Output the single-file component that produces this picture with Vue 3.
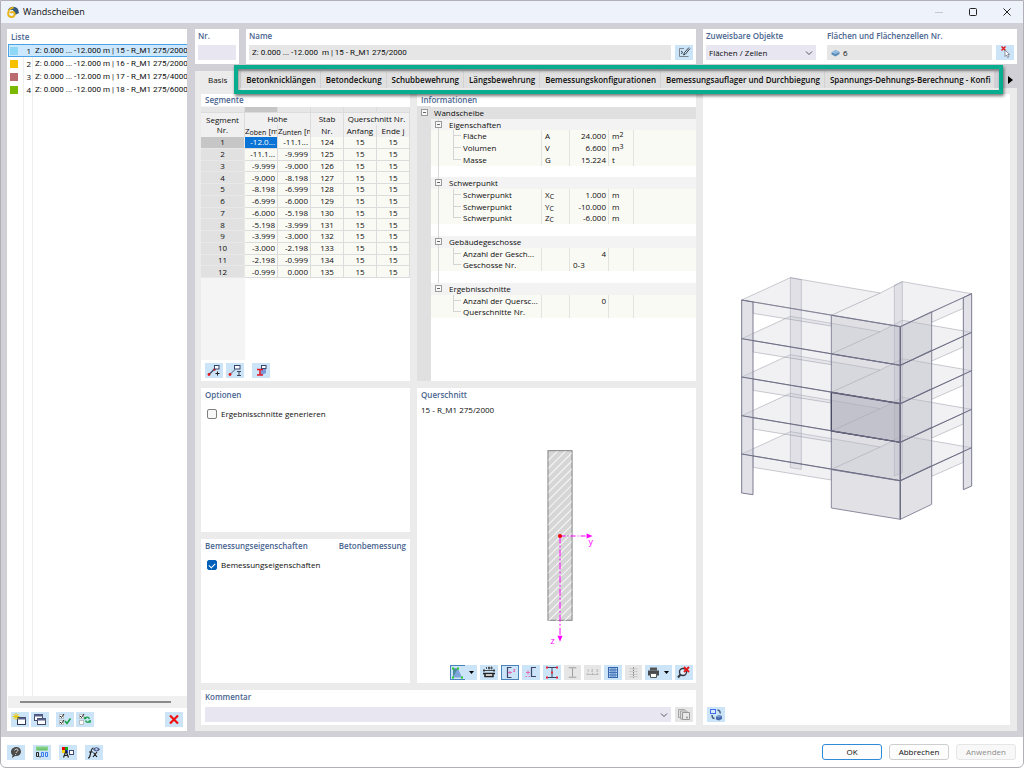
<script setup>
import { ref } from 'vue'

const walls = ref([
  { nr: 1, color: '#8dd7f7', name: 'Z: 0.000 ... -12.000 m | 15 - R_M1 275/2000' },
  { nr: 2, color: '#f7c100', name: 'Z: 0.000 ... -12.000 m | 16 - R_M1 275/2000' },
  { nr: 3, color: '#bb6c70', name: 'Z: 0.000 ... -12.000 m | 17 - R_M1 275/4000' },
  { nr: 4, color: '#79b900', name: 'Z: 0.000 ... -12.000 m | 18 - R_M1 275/6000' },
])
const selected = ref(1)

const tabs = [
  'Basis',
  'Betonknicklängen',
  'Betondeckung',
  'Schubbewehrung',
  'Längsbewehrung',
  'Bemessungskonfigurationen',
  'Bemessungsauflager und Durchbiegung',
  'Spannungs-Dehnungs-Berechnung - Konfi',
]

const segments = [
  ['-12.0...', '-11.1...', 124],
  ['-11.1...', '-9.999', 125],
  ['-9.999', '-9.000', 126],
  ['-9.000', '-8.198', 127],
  ['-8.198', '-6.999', 128],
  ['-6.999', '-6.000', 129],
  ['-6.000', '-5.198', 130],
  ['-5.198', '-3.999', 131],
  ['-3.999', '-3.000', 132],
  ['-3.000', '-2.198', 133],
  ['-2.198', '-0.999', 134],
  ['-0.999', '0.000', 135],
]

const info = [
  { kind: 'root', name: 'Wandscheibe' },
  { kind: 'group', name: 'Eigenschaften' },
  { kind: 'item', name: 'Fläche', sym: 'A', val: '24.000', unit: 'm', sup: '2' },
  { kind: 'item', name: 'Volumen', sym: 'V', val: '6.600', unit: 'm', sup: '3' },
  { kind: 'item', name: 'Masse', sym: 'G', val: '15.224', unit: 't', last: true },
  { kind: 'blank' },
  { kind: 'group', name: 'Schwerpunkt' },
  { kind: 'item', name: 'Schwerpunkt', sym: 'X', sub: 'C', val: '1.000', unit: 'm' },
  { kind: 'item', name: 'Schwerpunkt', sym: 'Y', sub: 'C', val: '-10.000', unit: 'm' },
  { kind: 'item', name: 'Schwerpunkt', sym: 'Z', sub: 'C', val: '-6.000', unit: 'm', last: true },
  { kind: 'blank' },
  { kind: 'group', name: 'Gebäudegeschosse' },
  { kind: 'item', name: 'Anzahl der Gesch...', val: '4' },
  { kind: 'item', name: 'Geschosse Nr.', val: '0-3', left: true, last: true },
  { kind: 'blank' },
  { kind: 'group', name: 'Ergebnisschnitte', end: true },
  { kind: 'item', name: 'Anzahl der Quersc...', val: '0', tail: true },
  { kind: 'item', name: 'Querschnitte Nr.', last: true, tail: true },
]

const icons = {
  newItem: '<rect x="6.500" y="5.500" width="8" height="7" fill="#fff" stroke="#333a50"/><path d="M6 6.500h9" stroke="#56618c" stroke-width="2"/><path d="M5 1v7M1.500 4.500h7M2.500 2l5 5M7.500 2l-5 5" stroke="#e8c800" stroke-width="1"/>',
  copyItem: '<rect x="3.500" y="2.500" width="8" height="6" fill="#fff" stroke="#444b60"/><path d="M3 3.500h9" stroke="#56618c" stroke-width="2"/><rect x="6.500" y="6.500" width="8" height="6" fill="#fff" stroke="#444b60"/><path d="M6 7.500h9" stroke="#56618c" stroke-width="2"/>',
  checkAll: '<path d="M3.500 2.500h4v4h-4zM3.500 8.500h4v4h-4z" fill="#fff" stroke="#aaa" stroke-width=".7"/><path d="M4 4l1.500 1.500L8 2M4 10l1.500 1.500L8 8" fill="none" stroke="#222"/><path d="M9 9l2 2.500L14.500 6.500" fill="none" stroke="#18a048" stroke-width="1.600"/>',
  invert: '<path d="M3.500 2.500h4v4h-4zM3.500 8.500h4v4h-4z" fill="#fff" stroke="#aaa" stroke-width=".7"/><path d="M4 4l1.500 1.500L8 2" fill="none" stroke="#222"/><path d="M8.500 7c1-2.500 4-2.500 5 0M14.500 8.500c-1 2.500-4 2.500-5 0" fill="none" stroke="#18a048" stroke-width="1.300"/><path d="M8 4.500l.5 3 2.500-1zM14.800 11l-.3-3-2.500 1z" fill="#18a048"/>',
  del: '<path d="M5 3.500l8 8M13 3.500l-8 8" stroke="#f01010" stroke-width="2.200"/>',
  help: '<path d="M9.500 2C6 2 4 4.500 4 7c0 1.500.8 2.500 1.500 3L5 13l3-2c4 .5 6-2 6-4.500S12 2 9.500 2z" fill="#4a4a4a"/><path d="M7.500 5.500c.5-2 4-2 3.500 0-.3 1-1.800 1-2 2.500M8.700 9v1" stroke="#ddd" fill="none"/>',
  units: '<path d="M3 1.500h12v4H3z" fill="#82d382"/><path d="M5 3.500v2M7 3.500v2M9 3.500v2M11 3.500v2M13 3.500v2" stroke="#3c9a50" stroke-width=".6"/><path d="M3.500 7.500h2v4h-2z" fill="none" stroke="#222"/><path d="M7 11v1.500" stroke="#222"/><path d="M8.500 7.500h2v4h-2zM12.500 7.500h2v4h-2z" fill="none" stroke="#3b7ded"/>',
  display: '<path d="M3 2h3v3H3z" fill="#e00"/><path d="M6 2h3v3H6z" fill="#14a614"/><path d="M3 5h3v3H3z" fill="#f4d000"/><path d="M6 5h3v3H6z" fill="#1546d8"/><path d="M4.500 12.500L7 6l2.500 6.500M5 10.500h4" fill="none" stroke="#222" stroke-width="1.200"/><rect x="10.500" y="5.500" width="4" height="4" fill="#fff" stroke="#444b70"/>',
  fx: '<path d="M3 13c2 0 2-2 2.500-4.500S6.500 3 8.500 3M4 7h4M8 12l4-5M8.500 7.500L12 12" fill="none" stroke="#222" stroke-width="1.200"/><path d="M8 4.500c2-3 5-3 7 0-2 2.500-5 2.500-7 0z" fill="#4c5a88"/><circle cx="11.500" cy="4.300" r="1.200" fill="#b8c4e8"/>',
  edit: '<path d="M9 3.500H4.500v8h9" fill="none" stroke="#7a858f"/><path d="M14 2.500L9.500 7.500 8.500 10l2-1L15 3.500M6 6l1.500 1L6.500 9" stroke="#384450" fill="none"/>',
  pick: '<path d="M5.500 1.500l4 4M9.500 1.500l-4 4" stroke="#e01818" stroke-width="1.400"/><path d="M9 5v6.500l1.500-1.500 1.200 2.500 1.200-.6-1.200-2.400h2z" fill="#fff" stroke="#778" stroke-width=".8"/>',
  lineAdd: '<path d="M3.500 12L10 5.500" stroke="#3c4a68" stroke-width="1.200"/><circle cx="4" cy="11.500" r="1.400" fill="#e01818"/><circle cx="9.500" cy="6.500" r="1.200" fill="#e01818"/><rect x="9.500" y="2.500" width="4.500" height="3.500" fill="#fff" stroke="#37446c"/><path d="M12.500 8.500v4M10.500 10.500h4" stroke="#222"/>',
  lineSec: '<path d="M3.500 12L9 6.500" stroke="#8393b0" stroke-width="1.200"/><circle cx="4" cy="11.500" r="1.400" fill="#e01818"/><rect x="8.500" y="2.500" width="5.500" height="3.500" fill="#fff" stroke="#37446c"/><path d="M11 8.500h4M11 12.500h4M13 8.500v4" stroke="#3c4658"/>',
  beam: '<path d="M9 7l5-2v5l-5 2.500z" fill="#7898d8"/><path d="M5 6.500h6M5 12h6M8 6.500v5" stroke="#e01828" stroke-width="1.600"/><rect x="9.500" y="2.500" width="4.500" height="3" fill="#fff" stroke="#37446c"/>',
  stress: '<path d="M3 12.500V3.500h5l4 9z" fill="#7fa4dc"/><path d="M3 12V3.500h5z" fill="#4b8f9c"/><path d="M2 2.500h2v2H2zM7 2.500h2v2H7zM2 11.500h2v2H2zM11 11.500h2v2h-2z" fill="#2ad02a"/>',
  dims: '<path d="M3 5.500h12M4 4v3M14 4v3" stroke="#222" stroke-width=".8"/><path d="M6.500 2v2M8.500 2h1v2h-1zM11 2h1v2h-1z" stroke="#333" fill="none" stroke-width=".8"/><path d="M5 8v3.500h8V8" fill="#fff" stroke="#222" stroke-width="1.500"/><path d="M3 8.500h12" stroke="#222" stroke-width="1.500"/>',
  axesC: '<path d="M10.500 2.500H6.500v10h4" fill="none" stroke="#3b466a" stroke-width="1.200"/><path d="M7 7.500h4M9 6v3M12.500 4.500H14l-1.500 2H14" fill="none" stroke="#e560b0" stroke-width=".9"/>',
  pointC: '<path d="M14 2.500H9.500v9H14" fill="none" stroke="#3b466a" stroke-width="1.200"/><path d="M4 7.500h4M6 5.500v4M3.500 11.500h1.500M6.500 11.500h1.500" stroke="#e560b0" fill="none" stroke-width=".9"/>',
  ibeam: '<path d="M4 2.500h10M4 12.500h10M9 3v9" stroke="#3b466a"/><path d="M3 1.500h2v2H3zM13 1.500h2v2h-2zM8 6.500h2v2H8zM3 11.500h2v2H3zM13 11.500h2v2h-2z" fill="#e8283c"/>',
  ibeamOff: '<path d="M5 2.500h8M5 12.500h8M9 3v9" stroke="#999"/>',
  numbers: '<path d="M3 9.500h12M3.500 8v2M9 8v2M14.500 8v2" stroke="#aaa" stroke-width=".8"/><path d="M4.500 4v3M8 4.500h1.500L8 6.500h1.500M13 4.500h1.500v2H13" fill="none" stroke="#aaa" stroke-width=".7"/>',
  grid: '<rect x="4.500" y="2.500" width="9" height="10" fill="#bcd7f5" stroke="#3465ae"/><path d="M7 2.500v10M9 2.500v10M11 2.500v10M4.500 5h9M4.500 7.500h9M4.500 10h9" stroke="#3465ae" stroke-width=".8"/>',
  rebar: '<path d="M9 2v11" stroke="#777" stroke-dasharray="1.500 1"/><path d="M5 3.500h3M10 3.500h3M5 6.500h3M10 6.500h3M5 9.500h3M10 9.500h3M5 12h3M10 12h3" stroke="#aaa" stroke-dasharray="1 1"/>',
  print: '<path d="M5 2.500h7v3H5z" fill="#555"/><path d="M3 5.500h11v5H3z" fill="#474b50"/><path d="M5.500 8.500h6v4h-6z" fill="#fff" stroke="#555"/>',
  zoomOff: '<circle cx="8" cy="7" r="3.500" fill="#e4f2fc" stroke="#333a44" stroke-width="1.400"/><path d="M5.500 9.500L3 12.500" stroke="#333a44" stroke-width="2"/><path d="M9 2l5 5M14 2L9 7" stroke="#e81818" stroke-width="1.800"/>',
  stack: '<path d="M3.500 2.500h6l1 1v7h-7z" fill="#ddd" stroke="#999" stroke-width=".8"/><path d="M5.500 4h6l1 1v7h-7z" fill="#ddd" stroke="#999" stroke-width=".8"/><path d="M7.500 5.500h7v7h-7z" fill="#e8e8e8" stroke="#999"/><circle cx="12" cy="10.500" r="1" fill="#999"/>',
  views: '<rect x="3.500" y="2.500" width="5" height="4" fill="#dbe8ff" stroke="#3f6ff0"/><path d="M10.500 3c2 .5 3 1.500 2.500 3.500M5 8c0 2 .5 3.500 2.500 3.500" fill="none" stroke="#445a80" stroke-width="1.400"/><path d="M9 9.500l3-1.500 3 1v3l-3 1.500-3-1z" fill="#4a6cae"/><path d="M9 9.500l3-1.500 3 1-3 1.500z" fill="#7d9cd0"/>',
}

const sectionTools = [
  { icon: 'stress', label: 'Spannungspunkte', menu: true, framed: true },
  { icon: 'dims', label: 'Bemaßung' },
  { icon: 'axesC', label: 'Hauptachsen', on: true },
  { icon: 'pointC', label: 'Schubmittelpunkt' },
  { icon: 'ibeam', label: 'Profilpunkte' },
  { icon: 'ibeamOff', label: 'Profilumriss', off: true },
  { icon: 'numbers', label: 'Nummerierung', off: true },
  { icon: 'grid', label: 'Raster' },
  { icon: 'rebar', label: 'Bewehrung', off: true },
  { icon: 'print', label: 'Drucken', menu: true },
  { icon: 'zoomOff', label: 'Zoom zurücksetzen' },
]

// Storey geometry, one unit is a third of a pixel
const floors = [0, 116, 231, 347, 462]
const shift = (pts, dy) => pts.map(([x, y]) => `${x},${y + dy}`).join(' ')
const slab = [[65, 104], [211, 37], [481, 83], [547, 49], [755, 85], [541, 184]]
const beamLeft = [[99, 110], [334, 150], [334, 182], [99, 144]]
const beamRight = [[635, 139], [730, 97], [730, 129], [635, 171]]
const wallFront = [[334, 150], [541, 184], [541, 300], [334, 266]]
const wallSide = [[541, 184], [635, 139], [635, 255], [541, 300]]
const edge = [[65, 104], [541, 184], [755, 85]]
const hatch = Array.from({ length: 24 }, (_, i) => 436 + i * 8)
</script>

<template>
  <div class="window">
    <header class="titlebar">
      <svg class="logo" viewBox="0 0 12 12" aria-hidden="true">
        <path d="M1 4C3 0 8 0 11 3l1 4-4 2L6 4z" fill="#35597c" />
        <path d="M6.500 1.500C3 2 1 5 1.200 8c.2 4 6.500 4 6.500.3C7.700 5.500 4 5.500 3.300 7" fill="none" stroke="#e8b51c" stroke-width="2" />
      </svg>
      <h1>Wandscheiben</h1>
      <div class="winbuttons">
        <button type="button" aria-label="Minimieren" disabled><svg viewBox="0 0 10 10"><path d="M1 5.500h8" stroke="#c3c8cf" /></svg></button>
        <button type="button" aria-label="Maximieren"><svg viewBox="0 0 10 10"><rect x="1.500" y="1.500" width="7" height="7" rx="1" fill="none" stroke="#222" /></svg></button>
        <button type="button" aria-label="Schließen"><svg viewBox="0 0 10 10"><path d="M1.500 1.500l7 7M8.500 1.500l-7 7" stroke="#222" /></svg></button>
      </div>
    </header>

    <main class="main">
      <aside class="list">
        <h2>Liste</h2>
        <ul>
          <li v-for="w in walls" :key="w.nr">
            <button type="button" class="item" :class="{ active: w.nr === selected }" @click="selected = w.nr">
              <span class="swatch" :style="{ background: w.color }"></span>
              <span class="num">{{ w.nr }}</span>
              <span class="label">{{ w.name }}</span>
            </button>
          </li>
        </ul>
        <div class="hscroll"><span></span></div>
        <div class="tools">
          <button type="button" class="ib" aria-label="Neu"><svg viewBox="0 0 18 15" v-html="icons.newItem"></svg></button>
          <button type="button" class="ib" aria-label="Kopieren"><svg viewBox="0 0 18 15" v-html="icons.copyItem"></svg></button>
          <button type="button" class="ib apart" aria-label="Alle auswählen"><svg viewBox="0 0 18 15" v-html="icons.checkAll"></svg></button>
          <button type="button" class="ib" aria-label="Auswahl umkehren"><svg viewBox="0 0 18 15" v-html="icons.invert"></svg></button>
          <button type="button" class="ib push" aria-label="Löschen"><svg viewBox="0 0 18 15" v-html="icons.del"></svg></button>
        </div>
      </aside>

      <div class="content">
        <div class="top">
          <section class="panel field-panel">
            <label for="nr">Nr.</label>
            <div class="line"><input id="nr" class="field lilac" type="text" /></div>
          </section>
          <section class="panel field-panel">
            <label for="name">Name</label>
            <div class="line">
              <input id="name" class="field digits" type="text" value="Z: 0.000 ... -12.000  m | 15 - R_M1 275/2000" readonly />
              <button type="button" class="ib" aria-label="Name bearbeiten"><svg viewBox="0 0 18 15" v-html="icons.edit"></svg></button>
            </div>
          </section>
          <section class="panel objects">
            <div class="field-panel">
              <label for="objects">Zuweisbare Objekte</label>
              <div class="line select">
                <select id="objects" class="field lilac"><option>Flächen / Zellen</option></select>
                <svg class="chev" viewBox="0 0 8 6"><path d="M1 1.500l3 3 3-3" fill="none" stroke="#555" /></svg>
              </div>
            </div>
            <div class="field-panel">
              <label for="cells">Flächen und Flächenzellen Nr.</label>
              <div class="line">
                <span class="iconfield">
                  <svg viewBox="0 0 9 8"><path d="M0.500 3.500l4-2.500 4 2v2l-4 2.500-4-2z" fill="#5b8cb8" /><path d="M0.500 3.500l4-2.500 4 2-4 2z" fill="#93bde0" /></svg>
                  <input id="cells" type="text" value="6" />
                </span>
                <button type="button" class="ib" aria-label="Auswählen"><svg viewBox="0 0 18 15" v-html="icons.pick"></svg></button>
              </div>
            </div>
          </section>
        </div>

        <div class="tabbar">
          <nav class="tabs">
            <button v-for="(t, i) in tabs" :key="t" type="button" :class="{ current: i === 0 }">{{ t }}</button>
          </nav>
          <button type="button" class="more" aria-label="Weitere Register"><svg viewBox="0 0 5 8"><path d="M0 0l5 4-5 4z" fill="#000" /></svg></button>
          <div class="highlight"></div>
        </div>

        <div class="sheet">
          <section class="panel segments">
            <h2>Segmente</h2>
            <div class="tablewrap">
              <table>
                <thead>
                  <tr class="thin"><th></th><th class="dark"></th><th></th><th></th><th></th><th></th></tr>
                  <tr>
                    <th rowspan="2">Segment<br />Nr.</th>
                    <th colspan="2">Höhe</th>
                    <th>Stab</th>
                    <th colspan="2">Querschnitt Nr.</th>
                  </tr>
                  <tr>
                    <th>Z<small>oben</small> [m</th>
                    <th>Z<small>unten</small> [m</th>
                    <th>Nr.</th>
                    <th>Anfang</th>
                    <th>Ende j</th>
                  </tr>
                </thead>
                <tbody>
                  <tr v-for="(s, i) in segments" :key="i">
                    <th :class="{ dark: i === 0 }">{{ i + 1 }}</th>
                    <td class="r" :class="{ sel: i === 0 }">{{ s[0] }}</td>
                    <td class="r">{{ s[1] }}</td>
                    <td>{{ s[2] }}</td>
                    <td>15</td>
                    <td>15</td>
                  </tr>
                </tbody>
              </table>
            </div>
            <div class="tools">
              <button type="button" class="ib" aria-label="Segment hinzufügen"><svg viewBox="0 0 18 15" v-html="icons.lineAdd"></svg></button>
              <button type="button" class="ib" aria-label="Segmentquerschnitt"><svg viewBox="0 0 18 15" v-html="icons.lineSec"></svg></button>
              <button type="button" class="ib apart" aria-label="Querschnitt bearbeiten"><svg viewBox="0 0 18 15" v-html="icons.beam"></svg></button>
            </div>
          </section>

          <section class="panel infos">
            <h2>Informationen</h2>
            <div class="tree">
              <div class="rows">
                <div v-for="(r, i) in info" :key="i" class="row" :class="[r.kind, { last: r.last, tail: r.tail, end: r.end }]">
                  <span class="gut"><i v-if="r.kind === 'root'" class="box"></i></span>
                  <template v-if="r.kind === 'root'"><span class="title">{{ r.name }}</span></template>
                  <template v-else>
                    <span class="stem"><i v-if="r.kind === 'group'" class="box"></i></span>
                    <span v-if="r.kind === 'group'" class="title">{{ r.name }}</span>
                    <template v-if="r.kind === 'item'">
                      <span class="elbow"></span>
                      <span class="name">{{ r.name }}</span>
                      <span class="sym">{{ r.sym }}<sub v-if="r.sub">{{ r.sub }}</sub></span>
                      <span class="val" :class="{ left: r.left }">{{ r.val }}</span>
                      <span class="unit">{{ r.unit }}<sup v-if="r.sup">{{ r.sup }}</sup></span>
                      <span class="rest"></span>
                    </template>
                  </template>
                </div>
              </div>
            </div>
          </section>

          <section class="panel options">
            <h2>Optionen</h2>
            <label class="check"><input type="checkbox" /><span>Ergebnisschnitte generieren</span></label>
          </section>

          <section class="panel design">
            <div class="split"><h2>Bemessungseigenschaften</h2><h2>Betonbemessung</h2></div>
            <label class="check"><input type="checkbox" checked /><span>Bemessungseigenschaften</span></label>
          </section>

          <section class="panel cross">
            <h2>Querschnitt</h2>
            <p>15 - R_M1 275/2000</p>
            <svg class="drawing" viewBox="418 417 278 245">
              <clipPath id="bar"><rect x="549" y="452" width="23" height="169" /></clipPath>
              <rect x="548.500" y="451.500" width="24" height="169" fill="#d6d6d6" stroke="#808080" />
              <g clip-path="url(#bar)" stroke="#f8f8f8" stroke-width="1">
                <path v-for="y in hatch" :key="y" :d="`M548 ${y + 26}l26-26`" />
              </g>
              <g stroke="#f0f" fill="#f0f">
                <path d="M561 536.500h25" stroke-dasharray="5 2 1 2" />
                <path d="M560.500 537v98" stroke-dasharray="7 2 2 2" />
                <path d="M587 534l6 2.500-6 2.500zM558 636l2.500 6 2.500-6z" stroke="none" />
              </g>
              <circle cx="560.500" cy="536.500" r="2" fill="#f00000" />
              <text x="589" y="545">y</text>
              <text x="551" y="644">z</text>
            </svg>
            <div class="tools end">
              <button v-for="t in sectionTools" :key="t.icon" type="button" class="ib" :class="{ wide: t.menu, off: t.off, on: t.on, framed: t.framed }" :disabled="t.off" :aria-label="t.label">
                <svg viewBox="0 0 18 15" v-html="icons[t.icon]"></svg>
                <svg v-if="t.menu" class="caret" viewBox="0 0 5 3"><path d="M0 0h5L2.500 3z" fill="#000" /></svg>
              </button>
            </div>
          </section>

          <section class="panel comment">
            <label for="comment">Kommentar</label>
            <div class="line">
              <span class="select">
                <select id="comment" class="field lilac"><option></option></select>
                <svg class="chev" viewBox="0 0 8 6"><path d="M1 1.500l3 3 3-3" fill="none" stroke="#555" /></svg>
              </span>
              <button type="button" class="ib off" disabled aria-label="Kommentare"><svg viewBox="0 0 18 15" v-html="icons.stack"></svg></button>
            </div>
          </section>

          <section class="panel view">
            <svg class="model" viewBox="-51 -508 921 1818">
              <g fill="#c8c8d2" fill-opacity=".4" stroke="#8c8c9c" stroke-opacity=".45" stroke-width="3">
                <polygon points="211,37 244,43 244,612 211,607" />
                <polygon points="523,60 547,49 547,622 523,632" />
              </g>
              <g v-for="f in floors.slice().reverse()" :key="f" fill="#c8c8d2" stroke="#8c8c9c" stroke-width="3">
                <polygon :points="shift(slab, f)" fill-opacity=".25" stroke-opacity=".45" />
                <polyline :points="shift([[334, 150], [481, 83]], f)" stroke-opacity=".5" />
                <polygon :points="shift(beamLeft, f)" fill-opacity=".25" stroke-opacity=".45" />
                <polygon :points="shift(beamRight, f)" fill-opacity=".25" stroke-opacity=".45" />
              </g>
              <g fill="#c4c4d0" fill-opacity=".5" stroke="#7c7c92" stroke-width="3">
                <polygon points="65,104 99,110 99,688 65,683" />
                <polygon points="730,97 755,85 755,662 730,673" />
              </g>
              <g v-for="(f, i) in floors" :key="'w' + f" stroke="#8a8a9e" stroke-width="3" fill="#b9b9c4" :fill-opacity="i === 4 ? 0.42 : 0.45">
                <polygon :points="shift(wallFront, f)" />
                <polygon :points="shift(wallSide, f)" />
              </g>
              <polygon :points="shift(wallFront, 231)" fill="#a8a8b8" fill-opacity=".45" stroke="#4c4c64" stroke-width="4" />
              <g fill="none" stroke="#6c6c84">
                <polyline v-for="(f, i) in floors" :key="'e' + f" :points="shift(edge, f)" :stroke-width="i === 0 ? 2 : 3" />
                <path d="M541 184v578" stroke-width="4" />
              </g>
            </svg>
            <div class="tools">
              <button type="button" class="ib" aria-label="Ansicht"><svg viewBox="0 0 18 15" v-html="icons.views"></svg></button>
            </div>
          </section>
        </div>
      </div>
    </main>

    <footer class="footer">
      <button type="button" class="ib" aria-label="Hilfe"><svg viewBox="0 0 18 15" v-html="icons.help"></svg></button>
      <button type="button" class="ib" aria-label="Einheiten"><svg viewBox="0 0 18 15" v-html="icons.units"></svg></button>
      <button type="button" class="ib" aria-label="Darstellung"><svg viewBox="0 0 18 15" v-html="icons.display"></svg></button>
      <button type="button" class="ib" aria-label="Formeln"><svg viewBox="0 0 18 15" v-html="icons.fx"></svg></button>
      <div class="actions">
        <button type="button" class="btn primary">OK</button>
        <button type="button" class="btn">Abbrechen</button>
        <button type="button" class="btn" disabled>Anwenden</button>
      </div>
    </footer>
  </div>
</template>

<style>
body {
  margin: 0;
}
</style>

<style scoped>
* {
  box-sizing: border-box;
}
.window {
  display: flex;
  flex-direction: column;
  min-height: 100vh;
  overflow: hidden;
  border: 1px solid #b0b0b6;
  border-radius: 0 0 6px 6px;
  background: #d0d0d6;
  color: #0c0c0c;
  font: 500 8px/12px "Open Sans", "Noto Sans", sans-serif;
}
button,
input,
select {
  margin: 0;
  padding: 0;
  border: 0;
  border-radius: 0;
  color: inherit;
  font: inherit;
}
h1,
h2,
p,
ul {
  margin: 0;
  padding: 0;
  font-size: inherit;
  font-weight: 400;
}
h2,
.field-panel label,
.comment label {
  display: block;
  color: #4a6590;
  font-weight: 600;
  line-height: 12px;
  white-space: nowrap;
}
svg {
  display: block;
}
.titlebar {
  display: flex;
  align-items: center;
  height: 22px;
  padding: 0 6px;
  background: #eef2fa;
}
.logo {
  width: 12px;
  height: 12px;
}
.titlebar h1 {
  margin-left: 4px;
  font-size: 9px;
  font-weight: 500;
}
.winbuttons {
  display: flex;
  gap: 14px;
  margin-left: auto;
}
.winbuttons button {
  width: 20px;
  height: 20px;
  background: none;
}
.winbuttons svg {
  width: 10px;
  height: 10px;
  margin: auto;
}
.main {
  display: grid;
  flex: 1;
  grid-template-columns: 180px minmax(0, 1fr);
  gap: 8px;
  padding: 6px;
}
.panel {
  min-width: 0;
  background: #fff;
}
.list {
  display: flex;
  flex-direction: column;
  min-width: 0;
  padding: 1px 0 1px 1px;
  background: #fff;
}
.list h2 {
  padding-left: 3px;
  line-height: 13px;
}
.list ul {
  flex: 1;
  padding-top: 1px;
  list-style: none;
  background: linear-gradient(90deg, transparent 15px, #eee 15px, #eee 16px, transparent 16px, transparent 24px, #eee 24px, #eee 25px, transparent 25px);
}
.item {
  display: flex;
  align-items: center;
  width: 100%;
  height: 13px;
  overflow: hidden;
  border: 1px solid transparent;
  border-right: 0;
  background: none;
  white-space: nowrap;
}
.item.active {
  border-color: #4ba3e6;
  background: #cce8ff;
}
.swatch {
  flex: none;
  width: 8px;
  height: 8px;
  margin-left: 1px;
}
.num {
  flex: none;
  width: 13px;
  text-align: right;
}
.label {
  margin-left: 4px;
}
.label,
.digits {
  font-family: Roboto, "Open Sans", sans-serif;
  font-weight: 400;
}
.hscroll {
  height: 12px;
  padding: 5px 16px 0 12px;
  background: #f0f0f0;
}
.hscroll span {
  display: block;
  height: 2px;
  background: #8a8a8a;
}
.tools {
  display: flex;
  gap: 3px;
  align-items: center;
  padding: 3px 4px;
}
.list .tools {
  gap: 2px;
  padding: 4px 4px 3px 3px;
}
.tools .apart {
  margin-left: 5px;
}
.tools .push {
  margin-left: auto;
}
.tools.end {
  justify-content: flex-end;
  padding: 3px;
}
.ib {
  display: flex;
  flex: none;
  align-items: center;
  width: 18px;
  height: 15px;
  background: #cce4f7;
}
.ib svg {
  width: 18px;
  height: 15px;
}
.ib.off {
  background: #e6e6e6;
}
.ib.on {
  outline: 1px solid #4a84bf;
  outline-offset: -1px;
}
.ib.wide {
  width: 27px;
}
.end .off {
  width: 17px;
}
.ib.framed {
  background: linear-gradient(#4a84bf, #4a84bf) 0 0 / 15px 1px no-repeat, linear-gradient(#4a84bf, #4a84bf) 0 100% / 15px 1px no-repeat, linear-gradient(#4a84bf, #4a84bf) 0 0 / 1px 15px no-repeat, #cce4f7;
}
.ib .caret {
  width: 5px;
  height: 3px;
  margin-left: 1px;
}
.content {
  display: flex;
  flex-direction: column;
  min-width: 0;
}
.top {
  display: grid;
  grid-template-columns: 44px minmax(0, 1fr) 314px;
  gap: 7px;
}
.field-panel {
  padding: 1px 3px 4px;
}
.line {
  display: flex;
  gap: 4px;
  margin-top: 3px;
}
.field {
  width: 100%;
  min-width: 0;
  height: 15px;
  padding: 0 3px;
  background: #e6e6e6;
  white-space: pre;
}
.lilac {
  background: #e7e6f1;
}
.objects {
  display: grid;
  grid-template-columns: 116px minmax(0, 1fr);
  gap: 5px;
}
.select {
  position: relative;
  flex: 1;
}
.select select {
  display: block;
  height: 15px;
  appearance: none;
}
.chev {
  position: absolute;
  top: 5px;
  right: 3px;
  width: 8px;
  height: 6px;
  pointer-events: none;
}
.iconfield {
  display: flex;
  flex: 1;
  gap: 3px;
  align-items: center;
  min-width: 0;
  height: 15px;
  padding: 0 4px;
  background: #e6e6e6;
}
.iconfield svg {
  flex: none;
  width: 9px;
  height: 8px;
}
.iconfield input {
  min-width: 0;
  background: none;
}
.tabbar {
  position: relative;
  display: flex;
  justify-content: space-between;
  height: 17px;
  margin-top: 7px;
}
.tabs {
  display: flex;
  flex: 1;
  min-width: 0;
  margin-right: 14px;
  overflow: hidden;
}
.tabs button {
  padding: 0 4px 0 5px;
  border-right: 1px solid #d2d2d2;
  background: #e0e0e0;
  font-weight: 600;
  text-align: left;
  white-space: nowrap;
}
.tabs button:last-child {
  flex: 1;
}
.tabs .current {
  padding: 0 13px;
  background: #ebebeb;
  font-weight: 500;
}
.more {
  width: 9px;
  background: none;
}
.more svg {
  width: 5px;
  height: 8px;
}
.highlight {
  position: absolute;
  top: -6px;
  right: 14px;
  left: 39px;
  height: 29px;
  border: 4px solid #08ad8f;
  box-shadow: 1px 2px 3px #0008, inset 1px 2px 3px #0006;
  pointer-events: none;
}
.sheet {
  display: grid;
  flex: 1;
  grid-template:
    "seg inf view" 287px
    "opt cro view" minmax(100px, 1fr)
    "des cro view" minmax(100px, 1fr)
    "com com view" 35px
    / 209px minmax(0, 1fr) 307px;
  gap: 7px;
  padding: 6px 7px 6px 6px;
  background: #ebebeb;
}
.segments {
  display: flex;
  flex-direction: column;
  grid-area: seg;
}
.sheet h2,
.comment label {
  padding-left: 4px;
}
.infos {
  display: flex;
  flex-direction: column;
  grid-area: inf;
}
.options {
  grid-area: opt;
}
.design {
  grid-area: des;
}
.cross {
  display: flex;
  flex-direction: column;
  grid-area: cro;
}
.comment {
  grid-area: com;
  padding-top: 1px;
}
.view {
  display: flex;
  flex-direction: column;
  grid-area: view;
}
.tablewrap {
  flex: 1;
  padding-top: 1px;
  background: linear-gradient(90deg, #f4f4f4 44px, transparent 44px);
}
table {
  width: 100%;
  height: 171px;
  border-collapse: separate;
  border-spacing: 0;
  table-layout: fixed;
}
th,
td {
  overflow: hidden;
  padding: 0;
  border-right: 1px solid #dcdcdc;
  border-bottom: 1px solid #dcdcdc;
  background: #fafaf5;
  font-weight: 500;
  line-height: 10px;
  text-align: center;
  white-space: nowrap;
}
th {
  background: #f0f0f0;
}
tbody th {
  background: #e1e1e1;
  border-color: #e8e8e8;
}
thead tr {
  height: 12px;
}
thead tr:not(.thin) th {
  border-bottom: 0;
}
thead .thin {
  height: 6px;
}
.thin th {
  background: #e6e6e6;
  line-height: 5px;
}
.thin th:first-child {
  width: 44px;
}
th.dark,
.thin th.dark {
  background: #c6c6c6;
}
th small {
  font-size: 7px;
  line-height: 0;
  vertical-align: -1px;
}
td.r {
  padding-right: 2px;
  text-align: right;
}
td.sel {
  background: #0a74d6;
  color: #fff;
}
.tree {
  flex: 1;
  padding-top: 1px;
  background: linear-gradient(90deg, #e0e0e0 14px, transparent 14px);
}
.rows {
  display: flex;
  flex-direction: column;
  height: 211px;
}
.row {
  display: flex;
  flex: 1;
  align-items: stretch;
  min-height: 0;
  background: #fff;
}
.row > span {
  flex: none;
  line-height: 12px;
  white-space: nowrap;
}
.root {
  background: #e0e0e0;
}
.group {
  background: #f3f3f3;
}
.row.item {
  height: auto;
  border: 0;
  background: #fafaf5;
}
.gut {
  position: relative;
  width: 14px;
  background: #e0e0e0;
}
.root .title {
  padding-left: 3px;
}
.stem {
  position: relative;
  width: 15px;
}
.stem::before {
  position: absolute;
  top: 0;
  bottom: 0;
  left: 7px;
  border-left: 1px solid #d8d8d8;
  content: "";
}
.tail .stem::before,
.end .stem::before {
  display: none;
}
.box {
  position: absolute;
  top: 2px;
  left: 4px;
  width: 7px;
  height: 7px;
  border: 1px solid #9a9a9a;
  background: linear-gradient(#666, #666) 1px 2px / 3px 1px no-repeat #f8f8f8;
}
.group .title {
  padding-left: 3px;
}
.elbow {
  position: relative;
  width: 17px;
}
.elbow::before {
  position: absolute;
  top: 0;
  bottom: 0;
  left: 7px;
  border-left: 1px solid #d4d4d4;
  content: "";
}
.elbow::after {
  position: absolute;
  top: 5px;
  left: 7px;
  width: 8px;
  border-top: 1px solid #d4d4d4;
  content: "";
}
.last .elbow::before {
  bottom: 6px;
}
.name {
  width: 78px;
  overflow: hidden;
}
.sym,
.val,
.unit,
.rest {
  padding: 0 3px;
  border-left: 1px solid #e3e3e0;
}
.sym {
  width: 28px;
}
.val {
  width: 39px;
  padding-right: 2px;
  text-align: right;
}
.val.left {
  text-align: left;
}
.unit {
  width: 25px;
}
sub,
sup {
  font-size: 7px;
  line-height: 0;
}
sub {
  vertical-align: -1px;
}
sup {
  vertical-align: 2px;
}
.split {
  display: flex;
  justify-content: space-between;
  padding-right: 4px;
}
.options,
.design,
.cross {
  padding-top: 1px;
}
.check {
  display: inline-flex;
  gap: 4px;
  align-items: center;
  margin: 7px 0 0 6px;
}
.check input {
  position: relative;
  width: 10px;
  height: 10px;
  border: 1px solid #808080;
  border-radius: 2px;
  background: #f8f8f8;
  appearance: none;
}
.check input:checked {
  border-color: #005fb8;
  background: #005fb8;
}
.check input:checked::after {
  position: absolute;
  top: 2px;
  left: 1px;
  width: 5px;
  height: 3px;
  border: solid #fff;
  border-width: 0 0 1px 1px;
  transform: rotate(-45deg);
  content: "";
}
.cross p {
  padding: 3px 4px 0;
  font-weight: 500;
}
.drawing {
  flex: 1;
  width: 100%;
  min-height: 0;
}
.drawing text {
  fill: #f0f;
  font-size: 9px;
}
.comment .line {
  padding: 0 3px 0 4px;
  margin-top: 4px;
}
.model {
  flex: 1;
  width: 100%;
  min-height: 0;
}
.footer {
  display: flex;
  gap: 8px;
  align-items: center;
  height: 30px;
  padding: 0 7px 0 6px;
  background: #fff;
}
.actions {
  display: flex;
  gap: 7px;
  margin-left: auto;
}
.btn {
  width: 60px;
  height: 16px;
  border: 1px solid #cfcfcf;
  border-radius: 3px;
  background: #fdfdfd;
  line-height: 12px;
}
.btn.primary {
  border-color: #2f8ad8;
}
.btn:disabled {
  border-color: #e6e6e6;
  background: #f8f8f8;
  color: #8e8e8e;
}
</style>
